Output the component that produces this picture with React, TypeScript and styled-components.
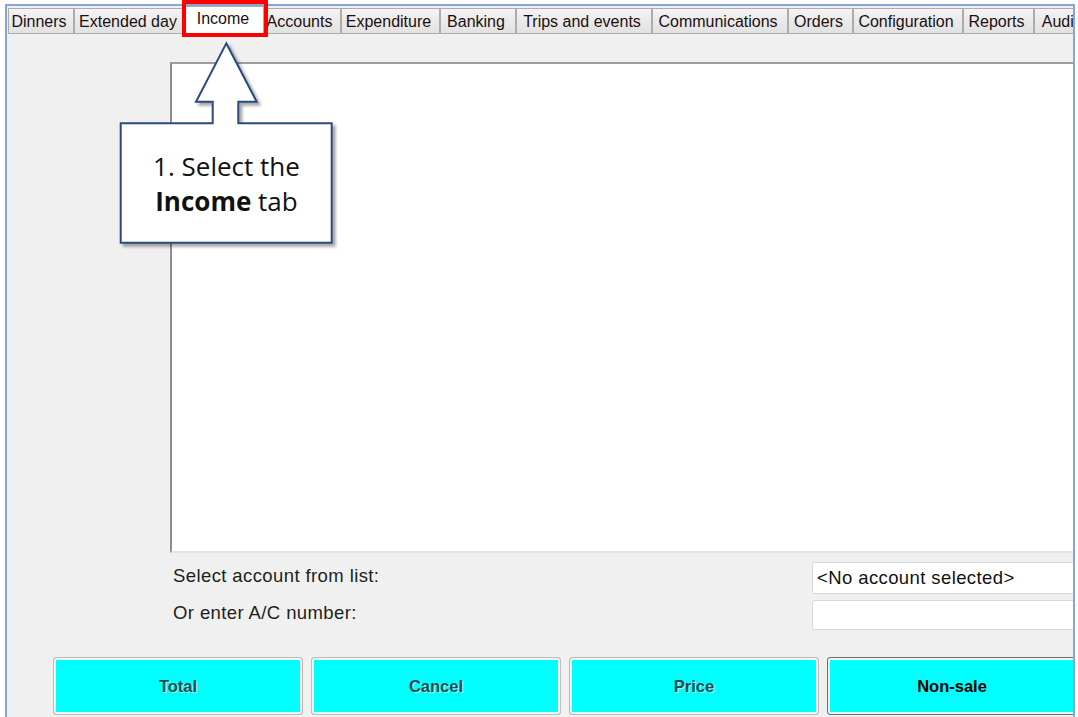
import styled, { createGlobalStyle } from "styled-components";

const GlobalStyle = createGlobalStyle`
  html, body {
    margin: 0;
    padding: 0;
    background: #ffffff;
  }
  body {
    font-family: "Liberation Sans", Arial, sans-serif;
  }
`;

const tabs = [
  { label: "Dinners", width: 66 },
  { label: "Extended day", width: 112 },
  { label: "Income", width: 76, active: true },
  { label: "Accounts", width: 79 },
  { label: "Expenditure", width: 99 },
  { label: "Banking", width: 76 },
  { label: "Trips and events", width: 136 },
  { label: "Communications", width: 136 },
  { label: "Orders", width: 65 },
  { label: "Configuration", width: 110 },
  { label: "Reports", width: 71 },
  { label: "Audit", width: 56 },
];

const buttons = [
  { label: "Total", enabled: false },
  { label: "Cancel", enabled: false },
  { label: "Price", enabled: false },
  { label: "Non-sale", enabled: true },
];

const Page = styled.div`
  position: relative;
  width: 1078px;
  height: 717px;
  overflow: hidden;
`;

const Window = styled.div`
  box-sizing: border-box;
  margin: 4px 0 0 5px;
  width: 1070px;
  height: 713px;
  border: 2px solid #86a6d8;
  border-bottom: none;
  background: #f0f0f0;
  overflow: hidden;
  display: flex;
  flex-direction: column;
`;

const TabStrip = styled.div`
  display: flex;
  height: 28px;
  padding: 2px 0 0 1px;
  box-sizing: border-box;
  flex-shrink: 0;
`;

const Tab = styled.div<{ $width: number; $active?: boolean }>`
  box-sizing: border-box;
  flex-shrink: 0;
  width: ${(p) => (p.$active ? p.$width + 4 : p.$width)}px;
  height: ${(p) => (p.$active ? 28 : 26)}px;
  margin: ${(p) => (p.$active ? "-2px -2px 0" : "0")};
  position: relative;
  z-index: ${(p) => (p.$active ? 1 : 0)};
  display: flex;
  align-items: center;
  justify-content: center;
  padding: ${(p) => (p.$active ? "0 2px 3px 0" : "2px 4px 0 0")};
  border: 1px solid #acacac;
  border-bottom: ${(p) => (p.$active ? "none" : "1px solid #acacac")};
  background: ${(p) =>
    p.$active ? "#ffffff" : "linear-gradient(#f4f4f4, #e1e1e1)"};
  color: #1c0f0f;
  font-size: 16px;
  white-space: nowrap;
  overflow: hidden;
`;

const Panel = styled.div`
  flex: 1;
  display: flex;
  flex-direction: column;
  padding-top: 28px;
`;

const ListBox = styled.div`
  box-sizing: border-box;
  margin-left: 163px;
  width: 920px;
  height: 491px;
  background: #ffffff;
  border-top: 2px solid #9d9d9d;
  border-left: 2px solid #8e8e8e;
  border-bottom: 2px solid #e4e4e4;
`;

const AccountForm = styled.div`
  display: grid;
  grid-template-columns: 642px 300px;
  grid-template-rows: 32px 30px;
  row-gap: 6px;
  margin: 9px 0 0 166px;
`;

const FieldLabel = styled.div`
  display: flex;
  align-items: center;
  padding-bottom: 5px;
  font-size: 18.5px;
  letter-spacing: 0.4px;
  color: #1e1e1e;
`;

const TextField = styled.div`
  box-sizing: border-box;
  display: flex;
  align-items: center;
  margin-left: -3px;
  padding-left: 4px;
  background: #ffffff;
  border: 1px solid #d9d9d9;
  border-radius: 2px;
  font-size: 18.5px;
  letter-spacing: 0.4px;
  color: #111111;
`;

const ButtonRow = styled.div`
  display: flex;
  gap: 8px;
  margin: 27px 0 0 46px;
`;

const TillButton = styled.div<{ $enabled: boolean }>`
  box-sizing: border-box;
  flex-shrink: 0;
  width: 250px;
  height: 58px;
  display: flex;
  align-items: center;
  justify-content: center;
  background: #00ffff;
  border: 1px solid ${(p) => (p.$enabled ? "#6e6e6e" : "#bdbdbd")};
  border-radius: 3px;
  box-shadow: inset 0 0 0 2px #f4f4f4;
  font-size: 16.5px;
  font-weight: bold;
  color: ${(p) => (p.$enabled ? "#000000" : "#1b4f53")};
  text-shadow: ${(p) => (p.$enabled ? "none" : "1px 1px 0 #9ff4f4")};
`;

// callout annotation pointing at the selected tab
const TabHighlight = styled.div`
  position: absolute;
  left: 182px;
  top: 0;
  width: 86px;
  height: 37px;
  box-sizing: border-box;
  border: 4.5px solid #ff0000;
  z-index: 5;
`;

const CalloutShape = styled.svg`
  position: absolute;
  left: 110px;
  top: 36px;
  z-index: 5;
`;

const CalloutText = styled.div`
  position: absolute;
  left: 121px;
  top: 124px;
  width: 211px;
  height: 119px;
  z-index: 6;
  display: flex;
  flex-direction: column;
  align-items: center;
  justify-content: center;
  font-family: "Open Sans", "Noto Sans", sans-serif;
  font-size: 26px;
  line-height: 35px;
  color: #111111;

  b {
    font-weight: 700;
  }
`;

const Callout = () => (
  <>
    <CalloutShape width={240} height={220} viewBox="110 36 240 220">
      <defs>
        <filter id="calloutShadow" x="-10%" y="-10%" width="130%" height="130%">
          <feDropShadow dx="3" dy="3" stdDeviation="1.5" floodColor="#000" floodOpacity="0.35" />
        </filter>
      </defs>
      <path
        d="M226.3 43.3 L256.7 101.7 L238.3 101.7 L238.3 123.3 L331.7 123.3 L331.7 242.7 L120.7 242.7 L120.7 123.3 L212.7 123.3 L212.7 101.7 L196 101.7 Z"
        fill="#ffffff"
        stroke="#2a4a7c"
        strokeWidth={2}
        strokeLinejoin="miter"
        filter="url(#calloutShadow)"
      />
    </CalloutShape>
    <CalloutText>
      <span>1. Select the</span>
      <span>
        <b>Income</b> tab
      </span>
    </CalloutText>
  </>
);

export default function App() {
  return (
    <Page>
      <GlobalStyle />
      <Window>
        <TabStrip>
          {tabs.map((t) => (
            <Tab key={t.label} $width={t.width} $active={t.active}>
              {t.label}
            </Tab>
          ))}
        </TabStrip>
        <Panel>
          <ListBox />
          <AccountForm>
            <FieldLabel>Select account from list:</FieldLabel>
            <TextField>&lt;No account selected&gt;</TextField>
            <FieldLabel>Or enter A/C number:</FieldLabel>
            <TextField />
          </AccountForm>
          <ButtonRow>
            {buttons.map((b) => (
              <TillButton key={b.label} $enabled={b.enabled}>
                {b.label}
              </TillButton>
            ))}
          </ButtonRow>
        </Panel>
      </Window>
      <TabHighlight />
      <Callout />
    </Page>
  );
}
